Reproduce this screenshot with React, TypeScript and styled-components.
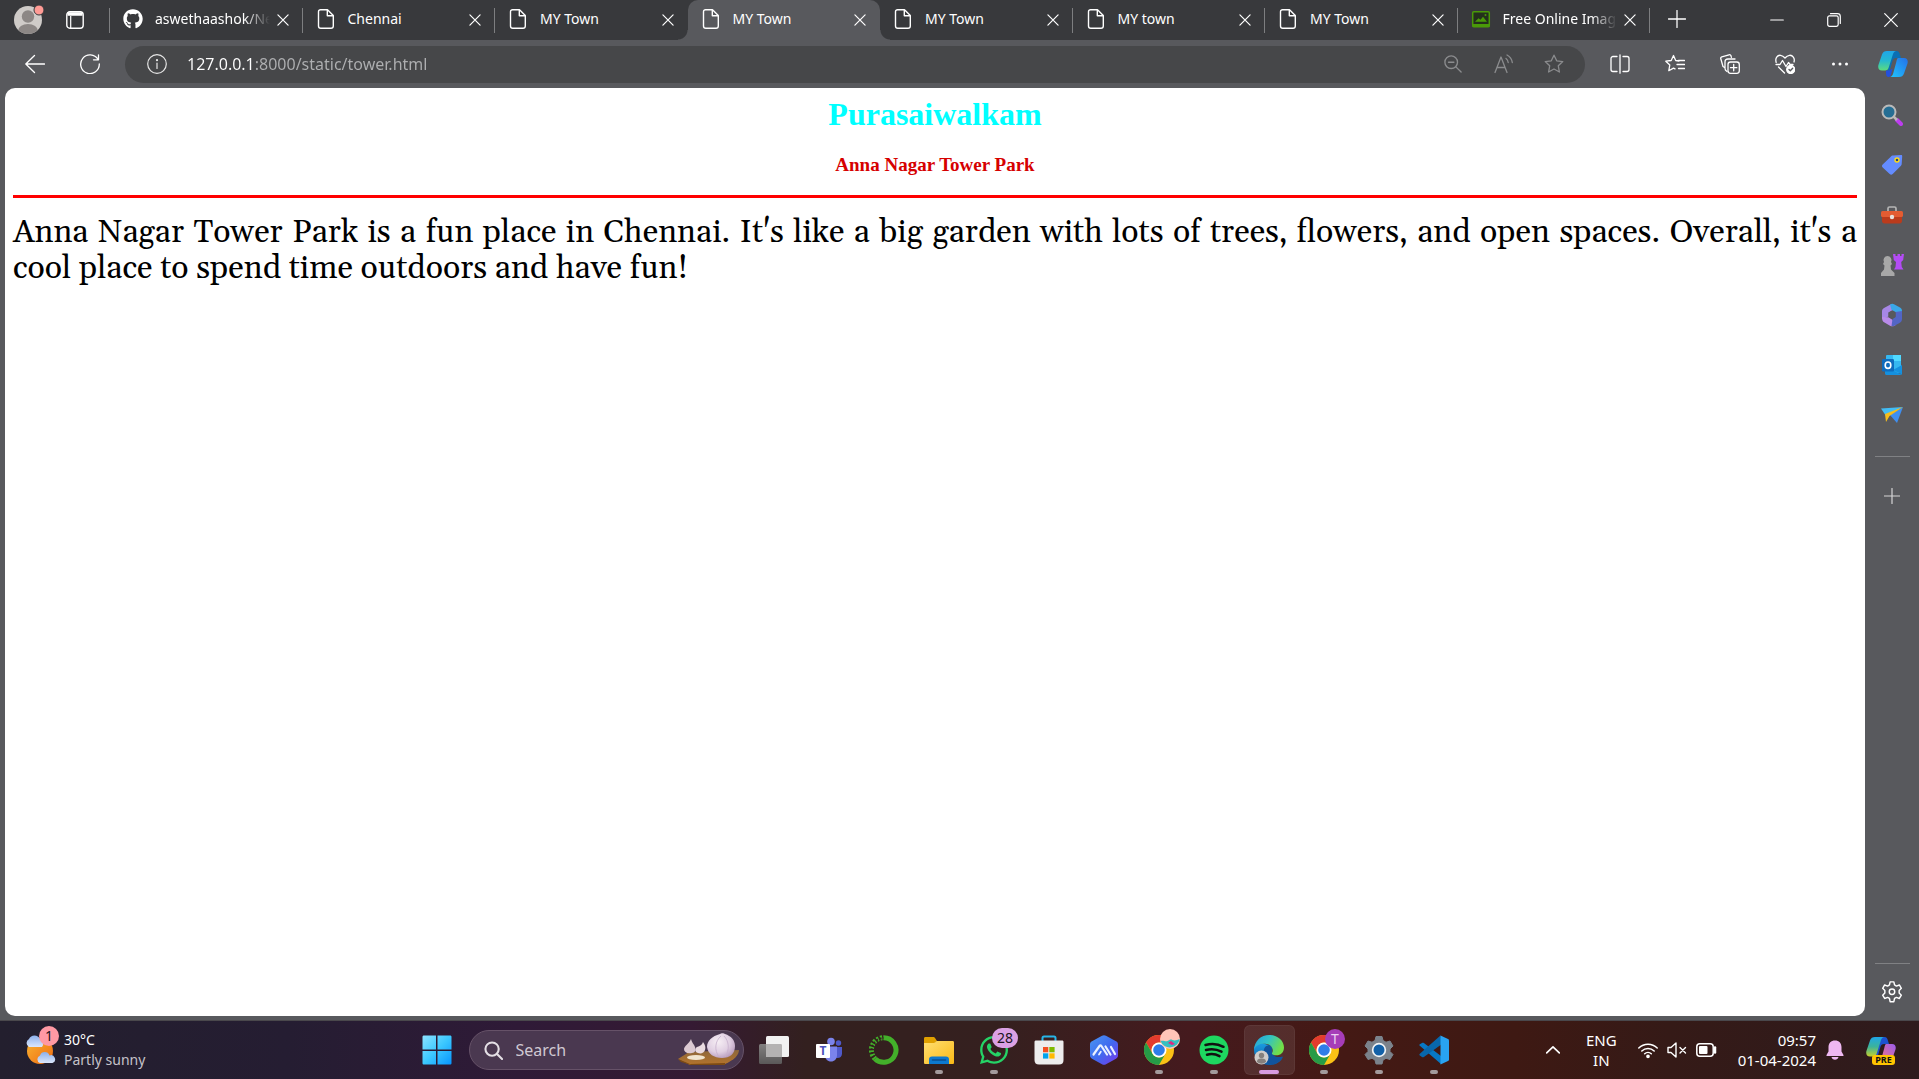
import React from "react";
import styled, { createGlobalStyle, css } from "styled-components";
import { FaGithub, FaWhatsapp } from "react-icons/fa";

const ui = `"Noto Sans", "Open Sans", sans-serif`;

const GlobalStyle = createGlobalStyle`
  *, *::before, *::after { box-sizing: border-box; }
  body { margin: 0; background: #58595d; }
  button { border: 0; padding: 0; background: none; color: inherit; font: inherit; }
  svg { display: block; flex: none; }
`;

const Desktop = styled.div`
  display: flex;
  flex-direction: column;
  min-height: 100vh;
  font-family: ${ui};
  color: #fff;
  background: #58595d;
`;

/* ---------- tab strip ---------- */

const TabStrip = styled.header`
  display: flex;
  height: 40px;
  background: #38393c;
`;

const StripStart = styled.div`
  position: relative;
  display: flex;
  align-items: center;
  flex: none;
  width: 110px;
  padding-left: 14px;
  gap: 20px;
`;

const Tabs = styled.div`
  display: grid;
  grid-template-columns: repeat(8, 1fr);
  flex: 0 1 1540px;
  min-width: 0;
`;

const Tab = styled.div<{ $active?: boolean; $divider?: boolean }>`
  position: relative;
  display: flex;
  align-items: center;
  min-width: 0;
  padding: 0 10px 0 13px;
  ${(p) =>
    p.$divider &&
    css`
      &::after {
        content: "";
        position: absolute;
        right: 0;
        top: 8px;
        width: 1px;
        height: 25px;
        background: #7d7e80;
      }
    `}
  ${(p) =>
    p.$active &&
    css`
      background: #58595d;
      border-radius: 10px 10px 0 0;
      &::before,
      &::after {
        content: "";
        position: absolute;
        bottom: 0;
        width: 10px;
        height: 10px;
      }
      &::before {
        right: 100%;
        background: radial-gradient(circle at 0 0, transparent 9px, #58595d 10px);
      }
      &::after {
        left: 100%;
        background: radial-gradient(circle at 100% 0, transparent 9px, #58595d 10px);
      }
    `}
`;

const TabTitle = styled.button<{ $fade?: boolean }>`
  display: flex;
  align-items: center;
  gap: 12px;
  flex: 1;
  min-width: 0;
  height: 38px;
  margin-bottom: 2px;
  text-align: left;
  font-size: 14px;
  line-height: 20px;
  white-space: nowrap;
  overflow: hidden;
  ${(p) => p.$fade && "mask-image: linear-gradient(to left, transparent, #000 26px);"}
`;

const TabClose = styled.button`
  display: grid;
  place-items: center;
  flex: none;
  width: 20px;
  height: 20px;
  margin-left: 3px;
`;

const StripDivider = styled.span`
  position: absolute;
  left: 109px;
  top: 8px;
  width: 1px;
  height: 25px;
  background: #7d7e80;
`;

const NewTab = styled.button`
  display: grid;
  place-items: center;
  width: 54px;
  height: 38px;
`;

const WindowButtons = styled.div`
  display: flex;
  margin-left: auto;
`;

const WindowButton = styled.button`
  display: grid;
  place-items: center;
  width: 57px;
  height: 39px;
`;

/* ---------- toolbar ---------- */

const Toolbar = styled.nav`
  display: flex;
  align-items: center;
  height: 48px;
  padding-left: 7px;
`;

const ToolButton = styled.button<{ $w?: number }>`
  display: grid;
  place-items: center;
  flex: none;
  width: ${(p) => p.$w ?? 55}px;
  height: 40px;
`;

const AddressBar = styled.form`
  display: flex;
  align-items: center;
  flex: 1;
  height: 37px;
  margin: 0 7px 0 8px;
  padding: 0 6px 0 16px;
  border-radius: 19px;
  background: #464749;
  color: #8b8c8e;
`;

const UrlInput = styled.input`
  flex: 1;
  min-width: 0;
  margin-left: 14px;
  padding: 0;
  border: 0;
  outline: 0;
  font: 16px/24px ${ui};
  color: transparent;
  background: linear-gradient(to right, #fff 68px, #aeafb1 68px);
  background-clip: text;
`;

/* ---------- body ---------- */

const Body = styled.div`
  display: flex;
  flex: 1;
  min-height: 0;
`;

const Page = styled.main`
  flex: 1;
  min-width: 0;
  margin: 0 0 4px 5px;
  padding: 8px;
  border-radius: 10px;
  background: #fff;
  font-family: "Liberation Serif", serif;
  color: #000;
`;

const PlaceTitle = styled.h1`
  margin: 0 0 21px;
  text-align: center;
  font-size: 32px;
  line-height: 37px;
  color: #0ff;
`;

const PlaceSubtitle = styled.h3`
  margin: 0 0 20px;
  text-align: center;
  font-size: 19px;
  line-height: 21px;
  color: #d60000;
`;

const Rule = styled.hr`
  height: 3px;
  margin: 0 0 17px;
  border: 0;
  background: #f00;
`;

const Description = styled.p`
  margin: 0;
  text-align: justify;
  font-family: Georgia, Gelasio, "Liberation Serif", serif;
  font-size: 32px;
  line-height: 36px;
`;

const Sidebar = styled.aside`
  display: flex;
  flex-direction: column;
  align-items: center;
  flex: none;
  width: 54px;
  padding: 2px 0 3px;
`;

const SideButton = styled.button`
  display: grid;
  place-items: center;
  width: 54px;
  height: 50px;
`;

const SideDivider = styled.hr<{ $push?: boolean }>`
  width: 35px;
  height: 1px;
  margin: ${(p) => (p.$push ? "auto 0 3px" : "16px 0 14px")};
  border: 0;
  background: #808184;
`;

/* ---------- taskbar ---------- */

const Taskbar = styled.footer`
  display: grid;
  grid-template-columns: 1fr auto 1fr;
  align-items: center;
  height: 59px;
  border-top: 1px solid #4a484c;
  background: linear-gradient(
    to right,
    #231f2e 0,
    #251d32 15%,
    #2f1a37 27%,
    #351a33 36%,
    #33201f 42%,
    #35201f 52%,
    #451a1e 62%,
    #441914 70%,
    #3e1913 79%,
    #351a17 87%,
    #2e1b1d 100%
  );
`;

const Weather = styled.button`
  display: flex;
  align-items: center;
  gap: 8px;
  padding-left: 24px;
  text-align: left;
  font-size: 14px;
  line-height: 20px;
`;

const IconWithBadge = styled.span`
  position: relative;
  display: block;
`;

const Badge = styled.span<{ $bg: string; $wide?: boolean; $color?: string; $right?: number }>`
  position: absolute;
  right: ${(p) => p.$right ?? -6}px;
  top: -6px;
  display: grid;
  place-items: center;
  width: ${(p) => (p.$wide ? 26 : 20)}px;
  height: 20px;
  border-radius: 10px;
  background: ${(p) => p.$bg};
  color: ${(p) => p.$color ?? "#1c1420"};
  font-size: 14px;
  line-height: 20px;
`;

const WeatherText = styled.span`
  display: grid;
  color: #c5c2c9;
  strong {
    font-weight: 400;
    color: #fff;
  }
`;

const Apps = styled.div`
  display: flex;
  align-items: center;
  margin-right: 48px;
`;

const AppButton = styled.button<{ $state?: "open" | "active" }>`
  position: relative;
  display: grid;
  place-items: center;
  width: 51px;
  height: 50px;
  margin: 0 2px;
  border-radius: 6px;
  ${(p) =>
    p.$state === "active" &&
    "background: rgba(255, 255, 255, 0.09); box-shadow: inset 0 0 0 1px rgba(255, 255, 255, 0.05);"}
  ${(p) =>
    p.$state &&
    css`
      &::after {
        content: "";
        position: absolute;
        bottom: 1px;
        left: 50%;
        width: ${p.$state === "active" ? 20 : 8}px;
        height: 4px;
        border-radius: 2px;
        transform: translateX(-50%);
        background: ${p.$state === "active" ? "#d79be0" : "#a39a9c"};
      }
    `}
`;

const SearchBox = styled.label`
  display: flex;
  align-items: center;
  width: 275px;
  height: 40px;
  margin: 0 3px 0 4px;
  padding: 0 3px 0 14px;
  border: 1px solid #665268;
  border-radius: 20px;
  background: #4a3850;
`;

const SearchInput = styled.input`
  flex: 1;
  min-width: 0;
  margin-left: 13px;
  padding: 0;
  border: 0;
  outline: 0;
  background: none;
  font: 16px/24px ${ui};
  color: #fff;
  &::placeholder {
    color: #d0c8d2;
    opacity: 1;
  }
`;

const Tray = styled.div`
  display: flex;
  align-items: center;
  justify-content: flex-end;
  padding-right: 23px;
  font-size: 15px;
  line-height: 20px;
`;

const TrayButton = styled.button<{ $ml: number; $align?: string }>`
  display: block;
  margin-left: ${(p) => p.$ml}px;
  text-align: ${(p) => p.$align ?? "center"};
`;

const TrayStatus = styled.button`
  display: flex;
  align-items: center;
  gap: 9px;
  margin-left: 21px;
`;

/* ---------- line icons ---------- */

type LineProps = { size?: number; w?: number; children: React.ReactNode; color?: string };
const Line = ({ size = 20, w = 1.2, children, color = "currentColor" }: LineProps) => (
  <svg
    width={size}
    height={size}
    viewBox="0 0 20 20"
    fill="none"
    stroke={color}
    strokeWidth={w}
    strokeLinecap="round"
    strokeLinejoin="round"
    aria-hidden
  >
    {children}
  </svg>
);

const FileIcon = () => (
  <Line w={1.4}>
    <path d="M4.5 .7h7l5.800 5.800v10.500a2.300 2.300 0 0 1-2.300 2.300H4.800a2.300 2.300 0 0 1-2.300-2.300V2.700a2 2 0 0 1 2-2zM11.300 1v5.700h5.700" />
  </Line>
);

const CloseIcon = () => (
  <Line size={12} w={2}>
    <path d="M1.500 1.500l17 17M18.500 1.500l-17 17" />
  </Line>
);

const ImageIcon = () => (
  <svg width="20" height="20" viewBox="0 0 20 20" aria-hidden>
    <rect x="1.700" y="2.700" width="16.600" height="15" rx="1" fill="#24301c" stroke="#4a9a08" strokeWidth="1.500" />
    <path d="M1.500 15h17v3h-17zM4 12.800l3.500-3.500 2 1.500 2.500-3 4 5z" fill="#4a9a08" />
    <circle cx="14.500" cy="6" r="1" fill="#4a9a08" />
  </svg>
);

const Avatar = () => (
  <svg width="32" height="32" viewBox="0 0 32 32" aria-hidden>
    <clipPath id="avatar"><circle cx="14" cy="16" r="14" /></clipPath>
    <g clipPath="url(#avatar)">
      <rect width="32" height="32" fill="#cfcbc8" />
      <circle cx="14" cy="12.500" r="6.200" fill="#8c8785" />
      <ellipse cx="14" cy="27" rx="10" ry="7" fill="#8c8785" />
    </g>
    <circle cx="25" cy="6" r="5" fill="#ff9b95" stroke="#38393c" strokeWidth="1" />
  </svg>
);

const WorkspacesIcon = () => (
  <svg width="18" height="18" viewBox="0 0 18 18" fill="none" stroke="#fff" strokeWidth="1.400" aria-hidden>
    <rect x=".8" y=".8" width="16.400" height="16.400" rx="3" />
    <path d="M1.500 3h15" strokeWidth="3.500" />
    <path d="M4.700 5v12" strokeWidth="1.200" />
  </svg>
);

/* ---------- colour icons ---------- */

const Copilot = ({ pre }: { pre?: boolean }) => {
  const id = pre ? "cp" : "ct";
  return (
    <svg width="30" height="28" viewBox="0 0 30 28" aria-hidden>
      <defs>
        <linearGradient id={id + "a"} x1="0" y1="0" x2="0" y2="1">
          <stop offset="0" stopColor="#1fa6e8" />
          <stop offset=".5" stopColor={pre ? "#3cb39a" : "#25b8d0"} />
          <stop offset="1" stopColor={pre ? "#c5cf2b" : "#5ddc7c"} />
        </linearGradient>
        <linearGradient id={id + "b"} x1="1" y1="0" x2="0" y2="1">
          <stop offset="0" stopColor={pre ? "#9a5cf0" : "#2470e8"} />
          <stop offset="1" stopColor={pre ? "#ff7a70" : "#20c6ff"} />
        </linearGradient>
      </defs>
      <path d="M13 1h5.500c2.300 0 2.800 1.500 3.400 3.500L23 8h-5c-2 0-3 1-3.600 3L11 23c-.5 2-1.500 3-2.500 3z" fill={pre ? "#1d52cf" : "#0a6fb4"} />
      <path d="M9 1h9c-2 .5-2.700 2-3.300 4l-4 12.500c-.6 2-1.500 3-3.500 3H4C.8 20.500-.3 18 .4 15L4 4.500C4.800 2 6.500 1 9 1z" fill={`url(#${id}a)`} />
      <path d="M20 8h6c3.200 0 4.300 2.500 3.500 5.500L26 23.500c-.8 2.500-2.500 3.500-5 3.500h-9c2-.5 2.700-2 3.300-4l3-11c.5-2 .7-3.500 1.700-4z" fill={`url(#${id}b)`} />
      {!pre && <path d="M8 20.500h3.500l3-2-1.500 6c-.5 1.500-1 2.500-2.500 2.500-2.500 0-2.500-3-2.500-6.500z" fill="#2450dd" />}
    </svg>
  );
};

const PreTag = styled.span`
  position: absolute;
  left: 6px;
  bottom: -1px;
  width: 23px;
  border-radius: 3px;
  background: #ffc400;
  color: #111;
  text-align: center;
  font: 700 9px/10px ${ui};
`;

const SearchLens = () => (
  <svg width="22" height="22" viewBox="0 0 22 22" aria-hidden>
    <path d="M16 16l4 4" stroke="#bd3df0" strokeWidth="4" strokeLinecap="round" />
    <path d="M12 12l4 4" stroke="#b9b9b9" strokeWidth="2.500" />
    <circle cx="8" cy="8" r="6.500" fill="#256e94" stroke="#bababa" strokeWidth="2" />
  </svg>
);

const TagIcon = () => (
  <svg width="22" height="22" viewBox="0 0 22 22" aria-hidden>
    <path d="M12 1.500l8-.5c1 0 1.200.5 1.200 1.200l-.5 7.600c0 1-.4 1.500-1 2.200l-8 8c-1 1-2 1-3 0l-7-6.500c-1-1-1-2 0-3L10 2.500c.6-.6 1-1 2-1z" fill="#648cff" />
    <circle cx="16" cy="6" r="2" fill="#26457c" stroke="#ffdb17" strokeWidth="1.400" />
  </svg>
);

const Toolbox = () => (
  <svg width="22" height="18" viewBox="0 0 22 18" aria-hidden>
    <path d="M7 6V2.500C7 1.500 7.500 1 8.500 1h5c1 0 1.500.5 1.500 1.500V6" fill="none" stroke="#b5b5b5" strokeWidth="1.700" />
    <path d="M1 9h20v6c0 1.500-1 2.500-2.500 2.500h-15C2 17.500 1 16.500 1 15z" fill="#ba3b1c" />
    <rect y="5" width="22" height="6" rx="1.500" fill="#e35c32" />
    <circle cx="11" cy="11" r="2.200" fill="#e7e1dc" />
  </svg>
);

const Chess = () => (
  <svg width="24" height="24" viewBox="0 0 24 24" aria-hidden>
    <path d="M13 1h2.500v2h2V1h2.500v2h1.500V1H24l-.8 6-2 2 .6 5 1.700 2.500H14l1.500-2.500.5-5-2.200-2z" fill="#b44cf5" />
    <path d="M4 9a4 4 0 1 1 7 0l1 2-1.500 1.500.5 4 3.500 3.500v3H1v-3l3-3.500.5-4L3 11z" fill="#a8a8a8" />
  </svg>
);

const M365 = () => (
  <svg width="22" height="24" viewBox="0 0 22 24" aria-hidden>
    <path d="M9.500 1.500L3 5C1.500 6 1 7 1 8.500V16l6.500-2.500V9.500L14 6z" fill="#a787e6" />
    <path d="M9 1.500c1.500-1 3-1 4.500 0l5.500 3c1.500 1 2 2 2 3.500v5l-6.500-4-4-2.200L9 1.500z" fill="#3aa8e8" />
    <path d="M1 14c0 3 .5 4.500 2.500 5.500l5.500 3.200c1.500.8 3 .8 4.500 0l1.500-1-4-5.200-3.500-2.200z" fill="#b98bea" />
    <path d="M21 8v8c0 2-1 3-2.500 4l-5 2.700c-1 .5-2 .5-3 .3L11.500 16l3-2V9z" fill="#5365c5" />
    <path d="M7.500 9.500L11 7.500l3.500 2v4.500L11 16l-3.500-2z" fill="#58595d" />
  </svg>
);

const Outlook = () => (
  <svg width="22" height="22" viewBox="0 0 22 22" aria-hidden>
    <rect x="5" y="1" width="15" height="18" rx="1" fill="#35b8f1" />
    <path d="M12 1h8v6h-8z" fill="#50d9ff" />
    <path d="M4 12l17 9H5.500c-1 0-1.500-.6-1.500-1.500zM21 11v9.500L12 16z" fill="#1490df" />
    <rect x="1" y="5" width="12" height="12.500" rx="1.200" fill="#0f6cbd" />
    <ellipse cx="7" cy="11.200" rx="2.800" ry="3.200" fill="none" stroke="#fff" strokeWidth="1.600" />
  </svg>
);

const Plane = () => (
  <svg width="23" height="18" viewBox="0 0 23 18" aria-hidden>
    <path d="M0 2.500L22 1 5 10z" fill="#42bdf5" />
    <path d="M22 1L9 9l7 8z" fill="#3f8ff0" />
    <path d="M4 8l18-7L8.500 10 5 16z" fill="#f6bd1b" />
  </svg>
);

const SunCloud = () => (
  <svg width="32" height="36" viewBox="0 0 32 36" aria-hidden>
    <defs>
      <linearGradient id="sun" x1="0" y1="0" x2="1" y2="1"><stop stopColor="#f8b531" /><stop offset="1" stopColor="#f06a12" /></linearGradient>
      <linearGradient id="cloud" x1="0" y1="0" x2="0" y2="1"><stop stopColor="#8cb0ec" /><stop offset="1" stopColor="#dbe6fb" /></linearGradient>
    </defs>
    <circle cx="16" cy="19" r="13" fill="url(#sun)" />
    <path d="M5 15a4.500 4.500 0 0 1 0-8 6 6 0 0 1 11 0 5 5 0 0 1 2 8z" fill="url(#cloud)" />
    <path d="M16 31a4 4 0 0 1 0-7.500 5 5 0 0 1 9.500 0 4 4 0 0 1 3 7.500z" fill="url(#cloud)" />
  </svg>
);

const WindowsLogo = () => (
  <svg width="30" height="30" viewBox="0 0 30 30" aria-hidden>
    <defs><linearGradient id="win" gradientUnits="userSpaceOnUse" x1="0" y1="0" x2="30" y2="30"><stop stopColor="#8fe4ff" /><stop offset=".5" stopColor="#3cc8ff" /><stop offset="1" stopColor="#0593ff" /></linearGradient></defs>
    <path d="M2 .5h12v14H.5V2C.5 1 1 .5 2 .5zM15.500.5H28c1 0 1.500.5 1.500 1.500v12.500h-14zM.5 16H14v13.500H2c-1 0-1.500-.5-1.500-1.500zM15.500 16h14v12c0 1-.5 1.500-1.500 1.500H15.500z" fill="url(#win)" />
  </svg>
);

const Garlic = () => (
  <svg width="62" height="34" viewBox="0 0 62 34" aria-hidden>
    <defs>
      <linearGradient id="board" x1="0" y1="0" x2="0" y2="1"><stop stopColor="#8d673c" /><stop offset="1" stopColor="#b5742b" /></linearGradient>
      <radialGradient id="bulb" cx=".4" cy=".35" r=".7"><stop stopColor="#f6eef4" /><stop offset=".6" stopColor="#e0cfe2" /><stop offset="1" stopColor="#b79bbd" /></radialGradient>
    </defs>
    <path d="M0 26l11-7 50-2c0 5-5 10-14 14l-35 1z" fill="url(#board)" />
    <path d="M0 26l12 5 35-1v2H13L3 29z" fill="#7c4a14" />
    <path d="M13 6c1 4 3 5 4 8 1 3 0 6-3 6-5 1-8-1-8-4 0-3 5-5 7-10z" fill="#dccad2" />
    <path d="M25 9c2 3 3 5 2 8s-4 4-7 3c-4-1-3-5-1-6 3-1 5-2 6-5z" fill="#eadbe0" />
    <ellipse cx="18" cy="24.500" rx="9" ry="2.500" fill="#f1e5cf" />
    <path d="M42 1c1-1 4-1 5 0 6 2 10 6 10 12 0 8-5 12-13 12S30 21 29 14c0-6 5-11 13-13z" fill="url(#bulb)" />
    <path d="M43 3c-6 5-7 14-2 21M46 3c5 5 6 14 1 21" fill="none" stroke="#c5aecb" strokeWidth=".8" />
  </svg>
);

const TaskView = () => (
  <svg width="30" height="28" viewBox="0 0 30 28" aria-hidden>
    <defs><linearGradient id="tv" x1="0" y1="0" x2="0" y2="1"><stop stopColor="#828080" /><stop offset="1" stopColor="#5a5858" /></linearGradient></defs>
    <rect x="0" y="8" width="23" height="20" rx="1.500" fill="url(#tv)" />
    <rect x="7" y="0" width="23" height="21" rx="1.500" fill="#f1f1f1" />
    <path d="M7 8h14.500c1 0 1.500.5 1.500 1.500V21H8c-1 0-1-.5-1-1z" fill="#b4b2b2" />
  </svg>
);

const LogoT = styled.span`
  position: absolute;
  left: 0;
  top: 7px;
  width: 14px;
  text-align: center;
  font: 700 12px/14px ${ui};
  color: #4b53bc;
`;

const Teams = () => (
  <IconWithBadge>
    <svg width="26" height="26" viewBox="0 0 26 26" aria-hidden>
      <circle cx="22.500" cy="6" r="2.700" fill="#5059c9" />
      <circle cx="15" cy="4.500" r="3.800" fill="#7b83eb" />
      <path d="M17 10h9v6.500c0 3-2 4.500-4.500 4.500S17 19.500 17 16.500z" fill="#5059c9" />
      <path d="M9 9.500h12V18c0 4-2.500 6.500-6 6.500S9 22 9 18z" fill="#7b83eb" />
      <rect x="0" y="7" width="14" height="14" rx="1" fill="#fff" />
    </svg>
    <LogoT>T</LogoT>
  </IconWithBadge>
);

const Anaconda = () => (
  <svg width="30" height="30" viewBox="0 0 30 30" fill="none" stroke="#43b02a" aria-hidden>
    <path d="M14.500 2.700a12.300 12.300 0 1 1-8.500 21" strokeWidth="5" />
    <path d="M6 23.700a12.300 12.300 0 0 1 9-21" strokeWidth="5" strokeDasharray="2 1.600" />
    <path d="M5 22a12 12 0 0 1 10-19" strokeWidth="2" stroke="#33201f" strokeDasharray="1.500 2.200" />
  </svg>
);

const Explorer = () => (
  <svg width="30" height="27" viewBox="0 0 30 27" aria-hidden>
    <defs><linearGradient id="fold" x1="0" y1="0" x2="1" y2="1"><stop stopColor="#ffdf72" /><stop offset="1" stopColor="#fab916" /></linearGradient></defs>
    <path d="M0 1.500C0 .5.500 0 1.500 0H9c1 0 1.500.3 2 1l2 3-3 3H0z" fill="#e0a000" />
    <path d="M0 6h9c1 0 2-.4 3-1.500.7-.6 1-.5 2-.5h14.500c1 0 1.500.5 1.500 1.500v20c0 1-.5 1.500-1.500 1.500h-27C.5 27 0 26.500 0 25.500z" fill="url(#fold)" />
    <path d="M5 27v-4.500C5 20.500 6 19.500 8 19.500h14c2 0 3 1 3 3V27z" fill="#0d79cf" />
    <path d="M8.500 23h13" stroke="#0a4f91" strokeWidth="1.500" strokeLinecap="round" />
  </svg>
);

const Store = () => (
  <svg width="30" height="30" viewBox="0 0 30 30" aria-hidden>
    <path d="M8.500 6V3c0-1 .5-1.500 1.500-1.500h10c1 0 1.500.5 1.500 1.500v3" fill="none" stroke="#27b5e8" strokeWidth="2" />
    <path d="M.5 7c0-1 .5-1.500 1.500-1.500h26c1 0 1.500.5 1.500 1.500v18c0 3-1.500 4.500-4.500 4.500H5C2 29.500.5 28 .5 25z" fill="#ededed" />
    <path d="M9 12h5.300v5.300H9z" fill="#f25022" />
    <path d="M15.300 12h5.300v5.300h-5.300z" fill="#7fba00" />
    <path d="M9 18.300h5.300v5.300H9z" fill="#00a4ef" />
    <path d="M15.300 18.300h5.300v5.300h-5.300z" fill="#ffb900" />
  </svg>
);

const HexApp = () => (
  <svg width="28" height="30" viewBox="0 0 28 30" aria-hidden>
    <defs><linearGradient id="hex" x1="0" y1="0" x2="1" y2="1"><stop stopColor="#4a97f2" /><stop offset=".5" stopColor="#3f6bef" /><stop offset="1" stopColor="#7637e8" /></linearGradient></defs>
    <path d="M12 .7c1.300-.7 2.700-.7 4 0l10 5.600c1.300.7 2 1.800 2 3.200v11c0 1.400-.7 2.500-2 3.200l-10 5.600c-1.300.7-2.700.7-4 0L2 23.700C.7 23 0 21.900 0 20.500v-11C0 8.100.7 7 2 6.300z" fill="url(#hex)" />
    <path d="M3.500 19.500l6-8.500c.7-.9 1.300-.9 1.900 0l5.600 8.500M15.500 11.500l5 8M21 12l4 7" fill="none" stroke="#e9f1ff" strokeWidth="2.200" strokeLinecap="round" />
    <path d="M9 19.500l1.800-2.800" stroke="#e9f1ff" strokeWidth="1.800" strokeLinecap="round" />
  </svg>
);

const Chrome = () => (
  <svg width="30" height="30" viewBox="0 0 30 30" aria-hidden>
    <circle cx="15" cy="15" r="15" fill="#fbc116" />
    <path d="M2 7.500A15 15 0 0 1 28 7.500H15a7.500 7.500 0 0 0-6.500 11.200z" fill="#e33b2e" />
    <path d="M2 7.500l6.500 11.200A7.500 7.500 0 0 0 21.500 18.700L15 30A15 15 0 0 1 2 7.500z" fill="#269b47" />
    <circle cx="15" cy="15" r="7.500" fill="#fff" />
    <circle cx="15" cy="15" r="5.800" fill="#2f7de9" />
  </svg>
);

const SceneBadge = () => (
  <svg width="20" height="20" viewBox="0 0 20 20" aria-hidden>
    <circle cx="10" cy="10" r="10" fill="#ffc5b8" />
    <path d="M.5 12c3-1 5 1 7 0s3-2 5-1 5 0 7.200-1A10 10 0 0 1 .5 12z" fill="#35bfc0" />
    <path d="M8 14l3-2 4 3-3 1z" fill="#dd2a83" />
  </svg>
);

const Spotify = () => (
  <svg width="30" height="30" viewBox="0 0 30 30" aria-hidden>
    <circle cx="15" cy="15" r="14.500" fill="#1ed760" />
    <path d="M6.500 10c6-1.800 12.500-1.200 18 1.800M7 15c5-1.400 10.500-1 15.500 1.700M8 19.700c4.500-1.200 8.500-.8 12.500 1.400" fill="none" stroke="#111" strokeLinecap="round" strokeWidth="2.500" />
  </svg>
);

const Edge = () => (
  <svg width="30" height="30" viewBox="0 0 30 30" aria-hidden>
    <defs>
      <linearGradient id="eg" x1="0" y1="0" x2="1" y2=".4"><stop stopColor="#249fe0" /><stop offset=".5" stopColor="#32c2c4" /><stop offset="1" stopColor="#72df48" /></linearGradient>
      <linearGradient id="eb" x1="0" y1="0" x2="0" y2="1"><stop stopColor="#1b9de2" /><stop offset="1" stopColor="#0c59a4" /></linearGradient>
    </defs>
    <path d="M0 15C0 24 7 30 15.500 30 21 30 25.500 27.500 28 23.500c-3 1.800-7 1.500-9.500 0L17 11 8 8C3 9 0 11 0 15z" fill="url(#eb)" />
    <path d="M10 18c-1-5 2-8 6-8l3 3c-2 2-1.500 5 .5 7 2.500 2.500 6 2.500 9 1.500.5.500.2 1.500-.5 2.300C25 28 20 30 16 29.500c-4-1-5.500-6-6-11.500z" fill="#11549d" />
    <path d="M0 14.500C.5 6 7 0 15.300 0 24 0 30 6 30 12.500c0 5-3.500 7.800-7.500 7.800-3 0-5-1-4.500-2.300 1.500-2 1-8-5.500-9C7 8 2 10 0 14.500z" fill="url(#eg)" />
    <circle cx="7.500" cy="22.500" r="7" fill="#cfccca" />
    <circle cx="7.500" cy="20.500" r="2.700" fill="#85807d" />
    <path d="M3 27c0-3 2-3.500 4.500-3.500S12 24 12 27a7 7 0 0 1-9 0z" fill="#85807d" />
  </svg>
);

const SettingsGear = () => (
  <svg width="30" height="30" viewBox="0 0 30 30" aria-hidden>
    <path d="M12 1.500h6l1 4 3 1.700 4-1.200 3 5-3 3v2.500l3 3-3 5-4-1.200-3 1.700-1 4h-6l-1-4-3-1.700L4 24.500l-3-5 3-3V14l-3-3 3-5 4 1.200 3-1.700z" fill="#7b838c" stroke="#7b838c" strokeWidth="1" strokeLinejoin="round" />
    <circle cx="15" cy="15" r="7.200" fill="#f1f4f6" />
    <circle cx="15" cy="15" r="5.500" fill="#1261a8" />
  </svg>
);

const VsCode = () => (
  <svg width="30" height="30" viewBox="0 0 30 30" aria-hidden>
    <path d="M3 8c.6-.5 1.300-.4 1.900 0L22 21v8L.8 10.800c-.6-.5-.5-1.200 0-1.600z" fill="#0878c4" />
    <path d="M21.500.5L23 9 4.900 22c-.6.400-1.300.5-1.900 0L.8 20.500c-.6-.5-.6-1.200 0-1.700z" fill="#0867ac" />
    <path d="M21.500.5L29 4c.6.300 1 .8 1 1.500v19c0 .7-.4 1.200-1 1.500l-7.500 3.500z" fill="#29a3f2" />
  </svg>
);

const WifiIcon = () => (
  <Line w={1.5}>
    <path d="M.8 8a13 13 0 0 1 18.400 0M3.800 11a8.800 8.800 0 0 1 12.400 0M6.700 13.800a4.700 4.700 0 0 1 6.600 0" />
    <circle cx="10" cy="16.300" r="1.100" fill="#fff" />
  </Line>
);

const MuteIcon = () => (
  <Line w={1.4}>
    <path d="M1 7.500h3l5-4.500v14l-5-4.500H1zM13 7.500l5.500 5.500M18.500 7.500L13 13" />
  </Line>
);

const BatteryIcon = () => (
  <svg width="21" height="14" viewBox="0 0 21 14" fill="none" stroke="#fff" aria-hidden>
    <rect x=".8" y=".8" width="16.400" height="12.400" rx="3" strokeWidth="1.500" />
    <path d="M19 4.500v5" strokeWidth="2.500" strokeLinecap="round" />
    <rect x="3" y="3" width="8.500" height="8" rx="1" fill="#fff" stroke="none" />
  </svg>
);

const BellIcon = () => (
  <svg width="18" height="20" viewBox="0 0 18 20" fill="#efb8f2" aria-hidden>
    <path d="M9 .5c4 0 6.500 2.700 6.500 6.500v4.500l2 3.500c.2.600 0 1-.7 1H1.200c-.7 0-.9-.4-.7-1l2-3.500V7C2.500 3.200 5 .5 9 .5zM5.500 17h7c-.5 1.800-1.700 2.700-3.500 2.700S6 18.800 5.500 17z" />
  </svg>
);

const StarPath = "M10 1.200l2.700 5.600 6.100.8-4.500 4.200 1.100 6.200L10 15l-5.400 3 1.100-6.200L1.200 7.600l6.100-.8z";

const tabs: { title: string; kind: "git" | "file" | "image"; active?: boolean }[] = [
  { title: "aswethaashok/Ne", kind: "git" },
  { title: "Chennai", kind: "file" },
  { title: "MY Town", kind: "file" },
  { title: "MY Town", kind: "file", active: true },
  { title: "MY Town", kind: "file" },
  { title: "MY town", kind: "file" },
  { title: "MY Town", kind: "file" },
  { title: "Free Online Imag", kind: "image" },
];

const tabIcons = { git: <FaGithub size={20} />, file: <FileIcon />, image: <ImageIcon /> };

const sideItems: [string, React.ReactNode][] = [
  ["Search", <SearchLens />],
  ["Shopping", <TagIcon />],
  ["Tools", <Toolbox />],
  ["Games", <Chess />],
  ["Microsoft 365", <M365 />],
  ["Outlook", <Outlook />],
  ["Drop", <Plane />],
];

const BrowserTabs = () => (
  <TabStrip>
    <StripStart>
      <button aria-label="Profile"><Avatar /></button>
      <button aria-label="Workspaces"><WorkspacesIcon /></button>
      <StripDivider />
    </StripStart>
    <Tabs>
      {tabs.map((t, i) => (
        <Tab key={i} $active={t.active} $divider={!t.active && !tabs[i + 1]?.active}>
          <TabTitle $fade={t.kind !== "file"}>
            {tabIcons[t.kind]}
            {t.title}
          </TabTitle>
          <TabClose aria-label="Close tab"><CloseIcon /></TabClose>
        </Tab>
      ))}
    </Tabs>
    <NewTab aria-label="New tab"><Line size={18} w={1.4}><path d="M10 .5v19M.5 10h19" /></Line></NewTab>
    <WindowButtons>
      <WindowButton aria-label="Minimize"><Line size={14} w={1.7}><path d="M1 10h18" /></Line></WindowButton>
      <WindowButton aria-label="Restore">
        <Line size={14} w={1.7}><rect x="1" y="4" width="15" height="15" rx="2.500" /><path d="M5 1h10c2.500 0 4 1.500 4 4v10" /></Line>
      </WindowButton>
      <WindowButton aria-label="Close"><Line size={14} w={1.7}><path d="M1 1l18 18M19 1L1 19" /></Line></WindowButton>
    </WindowButtons>
  </TabStrip>
);

const BrowserToolbar = () => (
  <Toolbar>
    <ToolButton aria-label="Back"><Line w={1.3}><path d="M19.500 10H.8M9.500 1.500L.8 10l8.700 8.500" /></Line></ToolButton>
    <ToolButton aria-label="Refresh"><Line w={1.3}><path d="M18 5.500A9.300 9.300 0 1 0 19.300 10M18.500.8v5h-5" /></Line></ToolButton>
    <AddressBar onSubmit={(e) => e.preventDefault()}>
      <ToolButton $w={32} type="button" aria-label="Site information">
        <Line color="#e6e6e6"><circle cx="10" cy="10" r="9.300" /><path d="M10 9v5.500" /><circle cx="10" cy="6.200" r=".5" fill="#e6e6e6" /></Line>
      </ToolButton>
      <UrlInput aria-label="Address" defaultValue="127.0.0.1:8000/static/tower.html" />
      <ToolButton $w={50} type="button" aria-label="Zoom out">
        <Line size={18} w={1.5}><circle cx="8" cy="8" r="7" /><path d="M5 8h6M13.200 13.200L19 19" /></Line>
      </ToolButton>
      <ToolButton $w={51} type="button" aria-label="Read aloud">
        <Line w={1.3}><path d="M1 18.500L7 3l6 15.500M3.200 13.500h7.600M12 4.500c1.300 1 2 2.300 2.200 4M13 1c2.800 1.500 4.800 4 5.300 7.500" /></Line>
      </ToolButton>
      <ToolButton $w={50} type="button" aria-label="Add to favourites"><Line w={1.3}><path d={StarPath} /></Line></ToolButton>
    </AddressBar>
    <ToolButton aria-label="Split screen">
      <Line w={1.3}><path d="M7 2.500H3a2 2 0 0 0-2 2v11a2 2 0 0 0 2 2h4M13 2.500h4a2 2 0 0 1 2 2v11a2 2 0 0 1-2 2h-4M10 .8v18.400" /></Line>
    </ToolButton>
    <ToolButton aria-label="Favourites">
      <Line w={1.3}><path d="M14 7l-3.300-.5L8.500 1.500 6.200 6.500l-5.400.7 4 3.800-1 5.700 4.700-2.600 1.500.8M13.500 6.500h6M12 10.500h7.500M13.500 14.500h6" /></Line>
    </ToolButton>
    <ToolButton aria-label="Collections">
      <Line w={1.3}><path d="M4.500 13.500L3 12.500.8 4.800c-.3-1 .2-1.700 1-2L9 .8c1-.3 1.700.2 2 1l.4 1.500M7 17.500C5.500 16.500 5 16 5 14.500V8c0-2 1-3 3-3h7" /><rect x="8" y="8" width="11.300" height="11.300" rx="2.500" /><path d="M13.700 10.500v6.300M10.500 13.700h6.300" /></Line>
    </ToolButton>
    <ToolButton aria-label="Browser essentials">
      <Line w={1.3}>
        <path d="M1.200 8.500C-.2 4 2.500 1 5.500 1.300c2 .2 3.300 1.200 4.500 2.700 1.200-1.500 2.500-2.500 4.500-2.700 3-.3 5.700 2.700 4.500 6.700M3.500 13l6 6M1 10.500h4l2.500-4 3.500 6 2.500-4 1.500 2h3" />
        <circle cx="15.700" cy="15.500" r="4" fill="#fff" stroke="#fff" /><path d="M14 15.500l1.300 1.300 2.400-2.600" stroke="#58595d" />
      </Line>
    </ToolButton>
    <ToolButton aria-label="Settings and more">
      <Line><g fill="#fff" stroke="none"><circle cx="3.500" cy="10" r="1.500" /><circle cx="10" cy="10" r="1.500" /><circle cx="16.500" cy="10" r="1.500" /></g></Line>
    </ToolButton>
    <ToolButton $w={52} aria-label="Copilot"><Copilot /></ToolButton>
  </Toolbar>
);

const WindowsTaskbar = () => (
  <Taskbar>
    <Weather>
      <IconWithBadge>
        <SunCloud />
        <Badge $bg="#ff99a4" $right={-3}>1</Badge>
      </IconWithBadge>
      <WeatherText><strong>30°C</strong>Partly sunny</WeatherText>
    </Weather>
    <Apps>
      <AppButton aria-label="Start"><WindowsLogo /></AppButton>
      <SearchBox>
        <Line size={19} w={2.2} color="#e4dfe5"><circle cx="8.500" cy="8.500" r="7" /><path d="M13.700 13.700L19 19" /></Line>
        <SearchInput aria-label="Search" placeholder="Search" />
        <Garlic />
      </SearchBox>
      <AppButton aria-label="Task view"><TaskView /></AppButton>
      <AppButton aria-label="Teams"><Teams /></AppButton>
      <AppButton aria-label="Anaconda"><Anaconda /></AppButton>
      <AppButton $state="open" aria-label="File Explorer"><Explorer /></AppButton>
      <AppButton $state="open" aria-label="WhatsApp">
        <IconWithBadge><FaWhatsapp size={32} color="#25d366" /><Badge $bg="#dba1e4" $wide $right={-8}>28</Badge></IconWithBadge>
      </AppButton>
      <AppButton aria-label="Microsoft Store"><Store /></AppButton>
      <AppButton aria-label="App"><HexApp /></AppButton>
      <AppButton $state="open" aria-label="Chrome">
        <IconWithBadge><Chrome /><Badge $bg="transparent"><SceneBadge /></Badge></IconWithBadge>
      </AppButton>
      <AppButton $state="open" aria-label="Spotify"><Spotify /></AppButton>
      <AppButton $state="active" aria-label="Edge"><Edge /></AppButton>
      <AppButton $state="open" aria-label="Chrome, second profile">
        <IconWithBadge><Chrome /><Badge $bg="#a63db8" $color="#ecd0f1">T</Badge></IconWithBadge>
      </AppButton>
      <AppButton $state="open" aria-label="Settings"><SettingsGear /></AppButton>
      <AppButton $state="open" aria-label="Visual Studio Code"><VsCode /></AppButton>
    </Apps>
    <Tray>
      <TrayButton $ml={0} aria-label="Hidden icons"><Line size={14} w={2.4}><path d="M1 14l9-8.500 9 8.500" /></Line></TrayButton>
      <TrayButton $ml={26}>ENG<br />IN</TrayButton>
      <TrayStatus aria-label="Network, sound and battery"><WifiIcon /><MuteIcon /><BatteryIcon /></TrayStatus>
      <TrayButton $ml={21} $align="right">09:57<br />01-04-2024</TrayButton>
      <TrayButton $ml={10} aria-label="Notifications"><BellIcon /></TrayButton>
      <TrayButton $ml={22} aria-label="Copilot preview">
        <IconWithBadge><Copilot pre /><PreTag>PRE</PreTag></IconWithBadge>
      </TrayButton>
    </Tray>
  </Taskbar>
);

export default function App() {
  return (
    <Desktop>
      <GlobalStyle />
      <BrowserTabs />
      <BrowserToolbar />
      <Body>
        <Page>
          <PlaceTitle>Purasaiwalkam</PlaceTitle>
          <PlaceSubtitle>Anna Nagar Tower Park</PlaceSubtitle>
          <Rule />
          <Description>
            Anna Nagar Tower Park is a fun place in Chennai. It's like a big garden with lots of trees, flowers, and
            open spaces. Overall, it's a cool place to spend time outdoors and have fun!
          </Description>
        </Page>
        <Sidebar>
          {sideItems.map(([name, icon]) => (
            <SideButton key={name} aria-label={name}>{icon}</SideButton>
          ))}
          <SideDivider />
          <SideButton aria-label="Customize"><Line size={16} w={1.5} color="#d5d5d6"><path d="M10 .5v19M.5 10h19" /></Line></SideButton>
          <SideDivider $push />
          <SideButton aria-label="Sidebar settings">
            <Line size={22} w={1.3}>
              <path d="M8.300.8h3.400l.6 2.800 1.700 1 2.700-1 1.800 3-2 2v2.300l2 2-1.800 3-2.700-1-1.700 1-.6 2.900H8.300l-.6-2.900-1.700-1-2.700 1-1.800-3 2-2V8.600l-2-2 1.800-3 2.700 1 1.700-1z" />
              <circle cx="10" cy="9.800" r="2.500" />
            </Line>
          </SideButton>
        </Sidebar>
      </Body>
      <WindowsTaskbar />
    </Desktop>
  );
}
